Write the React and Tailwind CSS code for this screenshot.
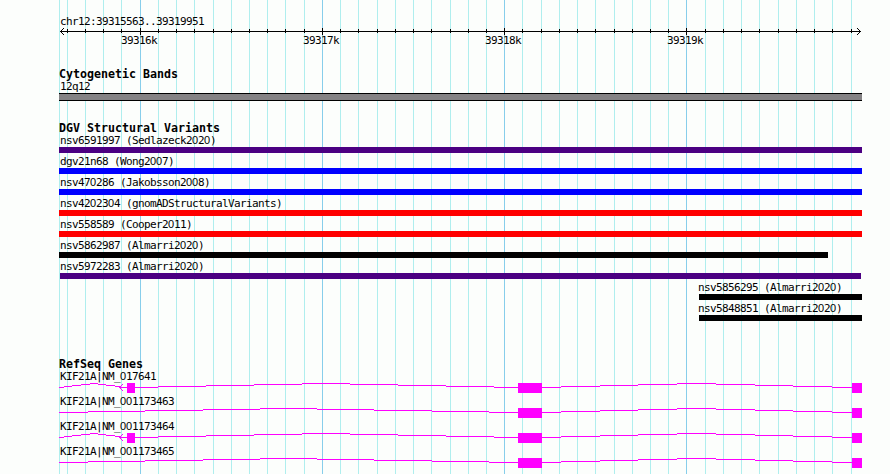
import React from 'react';

const MAJOR = [140, 322, 504, 686];
const MINOR = [
  67, 85, 103, 121, 158, 176, 194, 213, 231, 249, 267, 285, 304, 340, 358, 377,
  395, 413, 431, 450, 468, 486, 522, 541, 559, 577, 595, 614, 632, 650, 668,
  705, 723, 741, 759, 778, 796, 814, 832, 851,
];

const VARIANTS = [
  { name: 'nsv6591997 (Sedlazeck2020)', start: 59, end: 862, color: 'bg-[#4b0082]' },
  { name: 'dgv21n68 (Wong2007)', start: 59, end: 862, color: 'bg-[#0000ff]' },
  { name: 'nsv470286 (Jakobsson2008)', start: 59, end: 862, color: 'bg-[#0000ff]' },
  { name: 'nsv4202304 (gnomADStructuralVariants)', start: 59, end: 862, color: 'bg-[#ff0000]' },
  { name: 'nsv558589 (Cooper2011)', start: 59, end: 862, color: 'bg-[#ff0000]' },
  { name: 'nsv5862987 (Almarri2020)', start: 59, end: 828, color: 'bg-black' },
  { name: 'nsv5972283 (Almarri2020)', start: 60, end: 861, color: 'bg-[#4b0082]', label: 60 },
  { name: 'nsv5856295 (Almarri2020)', start: 699, end: 862, color: 'bg-black', label: 698 },
  { name: 'nsv5848851 (Almarri2020)', start: 699, end: 862, color: 'bg-black', label: 698 },
];

// Intron steps: [x positions of the breaks], rising four pixels to the middle and falling back
const FIRST_SHORT = [59, 64, 72, 81, 90, 98, 106, 115, 120, 127];
const FIRST_LONG = [135, 158, 206, 254, 302, 350, 398, 446, 494, 518];
const OPEN_LEFT = [59, 88, 145, 203, 260, 317, 374, 432, 489, 518];
const LAST = [542, 561, 600, 638, 677, 716, 755, 793, 832, 852];

const GENES = [
  { name: 'KIF21A|NM_017641', introns: [FIRST_SHORT, FIRST_LONG, LAST], small: true },
  { name: 'KIF21A|NM_001173463', introns: [OPEN_LEFT, LAST], small: false },
  { name: 'KIF21A|NM_001173464', introns: [FIRST_SHORT, FIRST_LONG, LAST], small: true },
  { name: 'KIF21A|NM_001173465', introns: [OPEN_LEFT, LAST], small: false },
];

function Label({ children, className = '' }) {
  return (
    <div
      className={`h-[13px] whitespace-nowrap font-['DejaVu_Sans_Mono',monospace] text-[11px] leading-[13px] tracking-[-0.622px] ${className}`}
    >
      {children.split(/(0)/).map((part, i) =>
        part === '0' ? (
          <span key={i} className="font-['Liberation_Sans',sans-serif] tracking-[-0.117px]">
            0
          </span>
        ) : (
          part
        ),
      )}
    </div>
  );
}

function Heading({ children, className = '' }) {
  return (
    <h2
      className={`ml-[59px] h-3 whitespace-nowrap font-['DejaVu_Sans_Mono',monospace] text-[11.63px] font-bold leading-[12px] ${className}`}
    >
      {children}
    </h2>
  );
}

function GridLines() {
  return (
    <svg className="absolute inset-0" width="890" height="474" shapeRendering="crispEdges">
      {[59, ...MINOR].map((x) => (
        <rect key={x} x={x} y="0" width="1" height="474" fill="#afeeee" />
      ))}
      {MAJOR.map((x) => (
        <rect key={x} x={x} y="0" width="1" height="474" fill="#87ceeb" />
      ))}
    </svg>
  );
}

function Ruler() {
  return (
    <svg className="block h-1.5 w-[890px] overflow-visible" viewBox="0 0 890 6" shapeRendering="crispEdges">
      <rect x="60" y="3" width="801" height="1" />
      {MINOR.map((x) => (
        <rect key={x} x={x} y="1" width="1" height="4" />
      ))}
      {MAJOR.map((x) => (
        <rect key={x} x={x} y="0" width="1" height="7" />
      ))}
      {[1, 2, 3].map((d) => (
        <g key={d}>
          <rect x={60 + d} y={3 - d} width="1" height="1" />
          <rect x={60 + d} y={3 + d} width="1" height="1" />
          <rect x={860 - d} y={3 - d} width="1" height="1" />
          <rect x={860 - d} y={3 + d} width="1" height="1" />
        </g>
      ))}
    </svg>
  );
}

function Gene({ gene }) {
  return (
    <div className="mb-0.5">
      <Label className="relative z-10 ml-[60px]">{gene.name}</Label>
      <svg
        className="block h-2.5 w-[890px] overflow-visible"
        viewBox="0 0 890 10"
        fill="#ff00ff"
        shapeRendering="crispEdges"
      >
        {gene.introns.map((breaks) =>
          breaks
            .slice(0, -1)
            .map((x, i) => (
              <rect key={x} x={x} y={Math.abs(i - 4)} width={breaks[i + 1] - x} height="1" />
            )),
        )}
        {gene.small && (
          <g>
            <rect x="127" y="0" width="8" height="10" />
            {[0, 1, 2, 3].map((d) => (
              <g key={d}>
                <rect x={119 + d} y={4 - d} width="1" height="1" />
                <rect x={119 + d} y={4 + d} width="1" height="1" />
              </g>
            ))}
          </g>
        )}
        <rect x="518" y="0" width="24" height="10" />
        <rect x="852" y="0" width="10" height="10" />
      </svg>
    </div>
  );
}

export default function App() {
  return (
    <main className="relative h-[474px] w-[890px] overflow-hidden bg-[#fcfefc] text-black">
      <GridLines />
      <div className="relative flex flex-col pt-[15px]">
        <Label className="ml-[60px]">chr12:39315563..39319951</Label>
        <Ruler />
        <div className="ml-[121px] grid grid-cols-[repeat(4,182px)]">
          {['39316k', '39317k', '39318k', '39319k'].map((t) => (
            <Label key={t}>{t}</Label>
          ))}
        </div>

        <Heading className="mt-[21px]">Cytogenetic Bands</Heading>
        <Label className="ml-[60px]">12q12</Label>
        <div className="ml-[59px] h-2 w-[803px] border-y border-black bg-[#848284]" />

        <Heading className="mt-[21px]">DGV Structural Variants</Heading>
        {VARIANTS.map((v) => (
          <div key={v.name} className="mb-0.5 flex flex-col">
            <div style={{ paddingLeft: v.label ?? 60 }}>
              <Label>{v.name}</Label>
            </div>
            <div className={`h-1.5 ${v.color}`} style={{ marginLeft: v.start, width: v.end - v.start }} />
          </div>
        ))}

        <Heading className="mt-[35px]">RefSeq Genes</Heading>
        {GENES.map((g) => (
          <Gene key={g.name} gene={g} />
        ))}
      </div>
    </main>
  );
}
